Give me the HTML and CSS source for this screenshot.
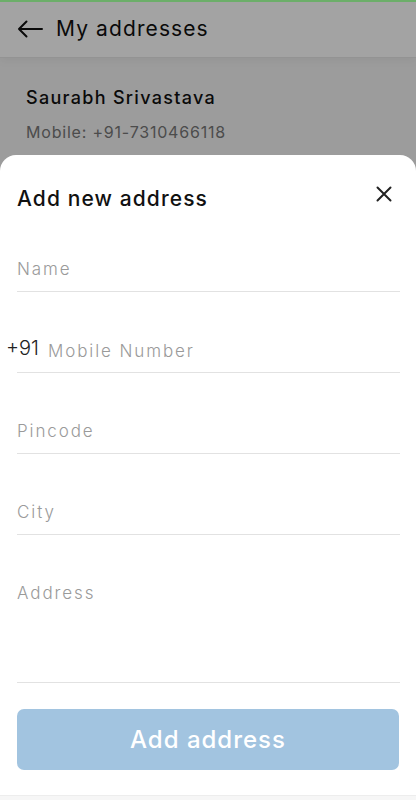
FILE: index.html
```html
<!DOCTYPE html>
<html lang="en">
<head>
    <meta charset="UTF-8">
    <meta name="viewport" content="width=device-width, initial-scale=1.0">
    <title>My addresses</title>
    <link rel="stylesheet" href="styles.css">
</head>
<body>
    <div class="screen">
        <div class="status-line"></div>
        <header class="topbar">
            <svg class="back-icon" width="26" height="18" viewBox="0 0 26 18">
                <path d="M25 9H2M9.5 1.5L2 9l7.5 7.5" fill="none" stroke="#111" stroke-width="2" stroke-linecap="round" stroke-linejoin="round"/>
            </svg>
            <h1>My addresses</h1>
        </header>
        <section class="address-card">
            <p class="card-name">Saurabh Srivastava</p>
            <p class="card-mobile">Mobile: +91-7310466118</p>
        </section>

        <div class="scrim"></div>

        <div class="sheet">
            <div class="sheet-head">
                <h2>Add new address</h2>
                <svg class="close-icon" width="16" height="16" viewBox="0 0 16 16">
                    <path d="M1.5 1.5l13 13M14.5 1.5l-13 13" fill="none" stroke="#222" stroke-width="2" stroke-linecap="round"/>
                </svg>
            </div>
            <form class="address-form">
                <label class="field"><input type="text" placeholder="Name"></label>
                <label class="field field-phone"><span class="prefix">+91</span><input type="tel" placeholder="Mobile Number"></label>
                <label class="field"><input type="text" placeholder="Pincode"></label>
                <label class="field"><input type="text" placeholder="City"></label>
                <label class="field field-address"><textarea placeholder="Address"></textarea></label>
                <button type="button" class="submit" disabled>Add address</button>
            </form>
        </div>
        <div class="navbar"></div>
    </div>
</body>
</html>
```

FILE: styles.css
```css
body {
    margin: 0;
    padding: 0;
    font-family: Inter, "Noto Sans", sans-serif;
    background: #f4f4f4;
}
.screen {
    position: relative;
    width: 416px;
    height: 800px;
    overflow: hidden;
    background: #f4f4f4;
}
.status-line {
    position: absolute;
    top: 0;
    left: 0;
    right: 0;
    height: 2px;
    background: #6cae69;
    z-index: 3;
}
.topbar {
    height: 57px;
    display: flex;
    align-items: center;
    padding: 0 0 0 17px;
    background: #fff;
    border-bottom: 1px solid #e6e6e6;
    box-shadow: 0 4px 8px rgba(0, 0, 0, 0.04);
}
.back-icon {
    margin-right: 13px;
}
.topbar h1 {
    margin: 0;
    font-size: 21px;
    font-weight: 400;
    color: #111;
    letter-spacing: 1.1px;
}
.address-card {
    padding: 28px 26px 0;
}
.card-name {
    margin: 0 0 10px;
    font-size: 18px;
    font-weight: 500;
    color: #111;
    line-height: 24px;
    letter-spacing: 1.3px;
}
.card-mobile {
    margin: 0;
    font-size: 16px;
    color: #777;
    line-height: 24px;
    letter-spacing: 0.8px;
}
.scrim {
    position: absolute;
    top: 0;
    left: 0;
    right: 0;
    bottom: 0;
    background: rgba(0, 0, 0, 0.36);
}
.sheet {
    position: absolute;
    left: 0;
    right: 0;
    top: 155px;
    height: 641px;
    box-sizing: border-box;
    padding: 31px 16px 0 17px;
    background: #fff;
    border-radius: 16px 16px 0 0;
    z-index: 2;
}
.sheet-head {
    display: flex;
    justify-content: space-between;
    align-items: center;
    height: 24px;
    margin-bottom: 1px;
}
.sheet-head h2 {
    margin: 0;
    font-size: 21px;
    font-weight: 500;
    color: #111;
    letter-spacing: 1.1px;
}
.close-icon {
    margin-right: 8px;
    margin-top: -8px;
}
.address-form {
    display: flex;
    flex-direction: column;
}
.field {
    display: flex;
    align-items: baseline;
    height: 81px;
    box-sizing: border-box;
    padding-top: 46px;
    border-bottom: 1px solid #e2e2e2;
}
.field input,
.field textarea {
    flex: 1;
    border: none;
    outline: none;
    padding: 0;
    margin: 0;
    font-family: inherit;
    font-size: 17px;
    line-height: 24px;
    height: 24px;
    color: #222;
    background: transparent;
    resize: none;
    letter-spacing: 1.9px;
}
.field input::placeholder,
.field textarea::placeholder {
    color: #9a9a9a;
    font-weight: 300;
}
.field-phone .prefix {
    margin-left: -11px;
    margin-right: 9px;
    font-size: 20px;
    font-weight: 300;
    color: #222;
    position: relative;
    top: -2px;
}
.field-address {
    height: 148px;
}
.submit {
    margin-top: 26px;
    margin-right: 1px;
    height: 61px;
    border: none;
    border-radius: 7px;
    background: #a2c4e0;
    color: #fff;
    font-family: inherit;
    font-size: 24px;
    font-weight: 500;
    letter-spacing: 1px;
}
.navbar {
    position: absolute;
    left: 0;
    right: 0;
    bottom: 0;
    height: 4px;
    background: #f6f6f6;
    border-top: 1px solid #ededed;
    z-index: 2;
}
```
